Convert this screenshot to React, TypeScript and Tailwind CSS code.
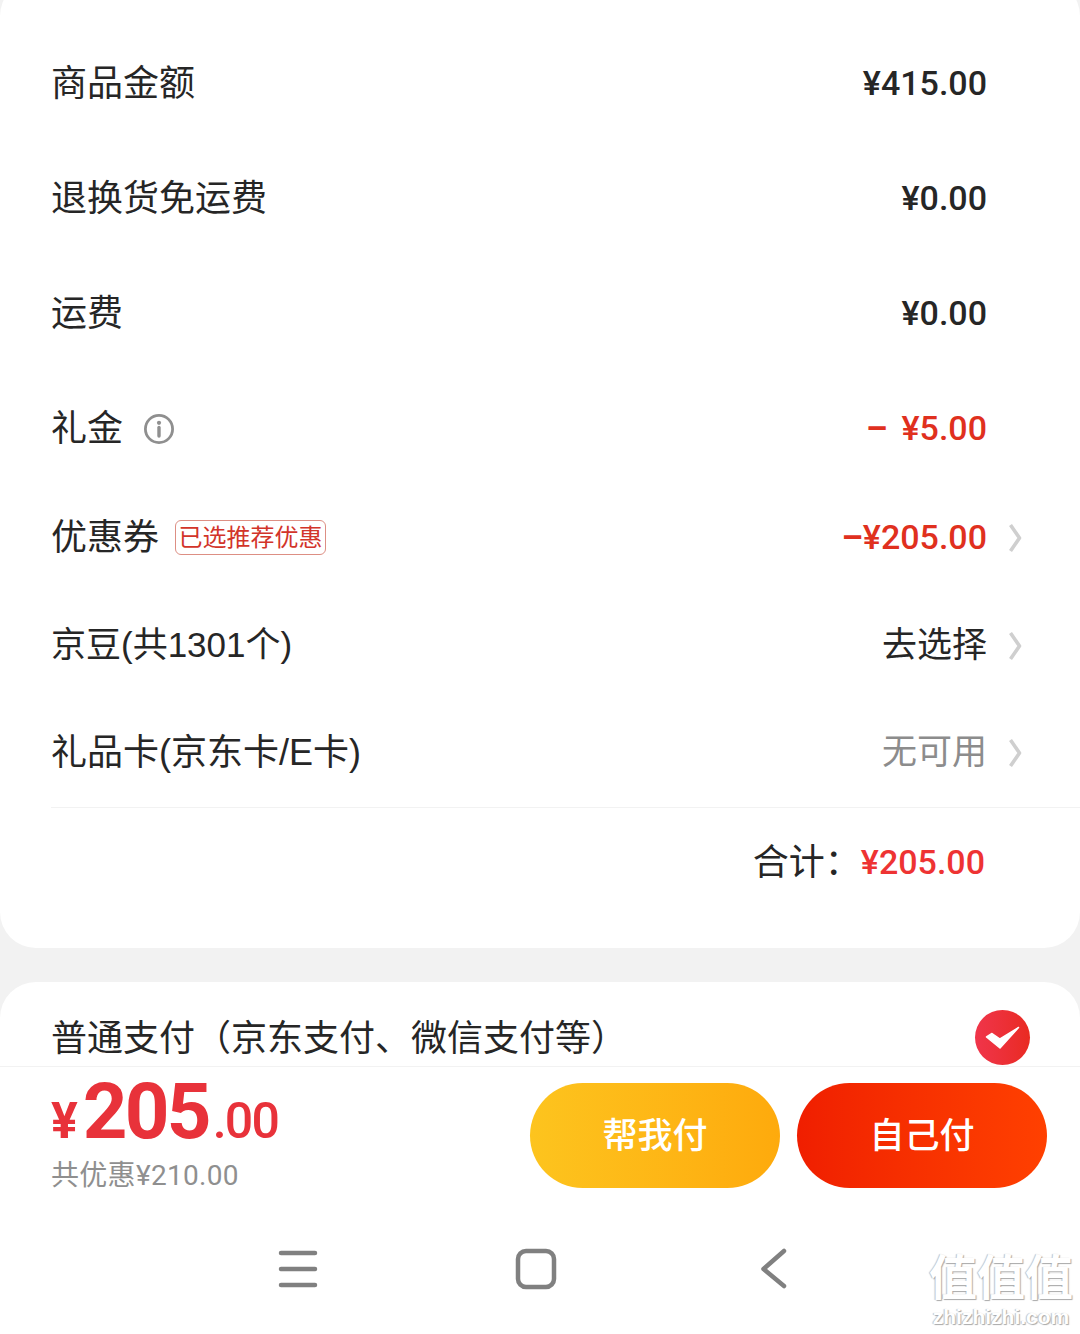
const CJK = "font-['Liberation_Sans','Noto_Sans_CJK_SC',sans-serif]";
const NUM = "font-['Roboto','Noto_Sans_CJK_SC',sans-serif]";

function Chevron() {
  return (
    <svg width="14" height="30" viewBox="0 0 14 30" fill="none" className="ml-[21px] shrink-0">
      <path d="M2.5 2 L11.5 15 L2.5 28" stroke="#cfcfcf" strokeWidth="3.6" strokeLinejoin="round" />
    </svg>
  );
}

function InfoIcon() {
  return (
    <svg width="32" height="32" viewBox="0 0 32 32" fill="none" className="ml-[20px] shrink-0">
      <circle cx="16" cy="16" r="13.6" stroke="#8f8f8f" strokeWidth="2.8" />
      <circle cx="16" cy="9.8" r="2.1" fill="#8f8f8f" />
      <path d="M16 14.5 V23" stroke="#8f8f8f" strokeWidth="3.4" strokeLinecap="round" />
    </svg>
  );
}

function Row({ label, extra, children, h, size = "text-[36px]" }: { label: string; extra?: React.ReactNode; children: React.ReactNode; h: string; size?: string }) {
  return (
    <div className={`flex items-center justify-between ${h}`}>
      <div className={`flex items-center ${size} text-[#262626]`}>
        <span>{label}</span>
        {extra}
      </div>
      <div className="flex items-center">{children}</div>
    </div>
  );
}

function Amount({ children, red }: { children: React.ReactNode; red?: boolean }) {
  return (
    <span className={`${NUM} text-[34px] font-medium ${red ? "text-[#e0301e]" : "text-[#262626]"}`}>
      {children}
    </span>
  );
}

export default function App() {
  return (
    <div className={`${CJK} relative h-[1334px] w-[1080px] overflow-hidden bg-[#f2f2f2]`}>
      {/* price summary */}
      <section className="-mt-[20px] h-[968px] rounded-[36px] bg-white pt-[46px] pl-[51px]">
        <div className="pr-[93px]">
          <Row label="商品金额" h="h-[115px]"><Amount>¥415.00</Amount></Row>
          <Row label="退换货免运费" h="h-[115px]"><Amount>¥0.00</Amount></Row>
          <Row label="运费" h="h-[115px]"><Amount>¥0.00</Amount></Row>
          <Row label="礼金" extra={<InfoIcon />} h="h-[115px]">
            <Amount red><span className="mr-[14px] font-bold">–</span>¥5.00</Amount>
          </Row>
        </div>
        <div className="pr-[58px]">
          <Row
            label="优惠券"
            h="h-[103px]"
            extra={
              <span className="ml-[16px] flex h-[35px] w-[151px] items-center justify-center rounded-[6px] border border-[#dd8f84] text-[24px] text-[#d2342a]">
                已选推荐优惠
              </span>
            }
          >
            <Amount red><span className="font-bold">–</span>¥205.00</Amount>
            <Chevron />
          </Row>
          <Row label="京豆(共1301个)" h="h-[113px]" size="text-[35px]">
            <span className="text-[35px] text-[#262626]">去选择</span>
            <Chevron />
          </Row>
          <Row label="礼品卡(京东卡/E卡)" h="h-[105px] pb-[4px]">
            <span className="text-[35px] text-[#8c8c8c]">无可用</span>
            <Chevron />
          </Row>
        </div>
        <div className="flex h-[110px] items-center justify-end border-t border-[#f2f2f2] pr-[95px] text-[36px] text-[#262626]">
          <span>合计：</span>
          <span className={`${NUM} text-[34px] font-medium text-[#ee3333]`}>¥205.00</span>
        </div>
      </section>

      {/* pay method */}
      <section className="mt-[34px] flex h-[84px] items-center justify-between rounded-t-[36px] bg-white pt-[26px] pr-[50px] pl-[51px]">
        <span className="mt-[3px] text-[36px] text-[#262626]">普通支付（京东支付、微信支付等）</span>
        <span className="flex h-[55px] w-[55px] items-center justify-center rounded-full bg-gradient-to-r from-[#f0354a] to-[#e92a20]">
          <svg width="55" height="55" viewBox="0 0 55 55" fill="white" stroke="white" strokeWidth="1.5" strokeLinejoin="round">
            <path d="M11.5 27 L17 23.5 L25 29 L43.5 17.5 L25 38 Z" />
          </svg>
        </span>
      </section>

      {/* bottom bar */}
      <section className="flex h-[156px] items-start justify-between border-t border-[#f2f2f2] bg-white pr-[33px] pl-[51px]">
        <div className="flex flex-col">
          <div className={`${NUM} flex h-[88px] items-baseline font-bold text-[#e8323a]`}>
            <span className="mr-[5px] text-[50px]">¥</span>
            <span className="text-[78px] leading-[90px] tracking-[-2.8px]">205</span>
            <span className="ml-[4px] text-[50px] font-medium tracking-[-1.8px]">.00</span>
          </div>
          <span className={`${NUM} text-[28px] tracking-[0.3px] text-[#8f8f8f]`}>共优惠¥210.00</span>
        </div>
        <div className="mt-[16px] flex gap-[17px]">
          <button className="h-[105px] w-[250px] rounded-full bg-gradient-to-r from-[#fdc41e] to-[#feaa0c] pt-[2px] text-[35px] font-medium text-white">
            帮我付
          </button>
          <button className="h-[105px] w-[250px] rounded-full bg-gradient-to-r from-[#f01e00] to-[#ff4000] pt-[2px] text-[35px] font-medium text-white">
            自己付
          </button>
        </div>
      </section>

      {/* android nav */}
      <nav className="flex h-[112px] items-start justify-center bg-white pt-[26px] pr-[8px]">
        <div className="flex w-[516px] items-center justify-between">
          <svg width="40" height="38" viewBox="0 0 40 38" fill="none">
            <path d="M3 3 H37 M3 19 H37 M3 35 H37" stroke="#808080" strokeWidth="4.5" strokeLinecap="round" />
          </svg>
          <svg width="42" height="42" viewBox="0 0 42 42" fill="none">
            <rect x="3" y="3" width="36" height="36" rx="8" stroke="#808080" strokeWidth="4.5" />
          </svg>
          <svg width="40" height="42" viewBox="0 0 40 42" fill="none">
            <path d="M30 3 L9.5 21 L30 38" stroke="#808080" strokeWidth="4.5" strokeLinecap="round" strokeLinejoin="round" />
          </svg>
        </div>
      </nav>

      {/* watermark */}
      <div className="absolute top-[1254px] left-[928px] flex w-[146px] flex-col items-center leading-none text-white [text-shadow:1px_1px_1px_#a8a8a8,-1px_0_1px_#c0c0c0]">
        <span className="text-[48px] leading-[50px] font-bold">值值值</span>
        <span className="mt-[2px] text-[21px] leading-[22px] font-bold">zhizhizhi.com</span>
      </div>
    </div>
  );
}
